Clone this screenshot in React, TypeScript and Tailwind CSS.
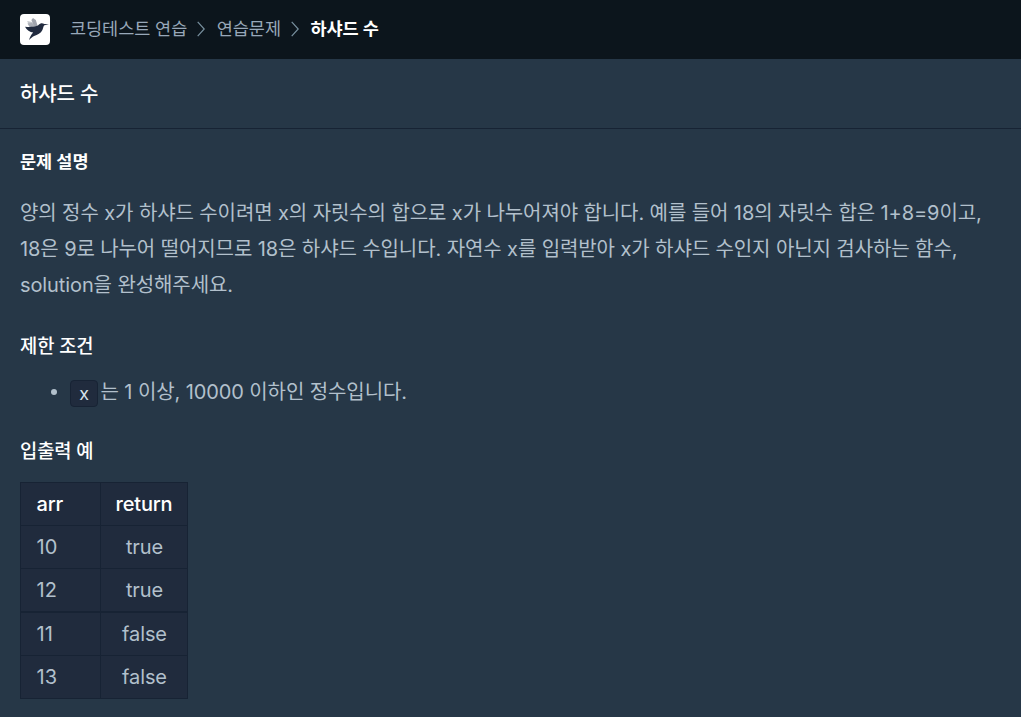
const crumbs = ["코딩테스트 연습", "연습문제"];

const examples = [
  { arr: "10", result: "true" },
  { arr: "12", result: "true" },
  { arr: "11", result: "false" },
  { arr: "13", result: "false" },
];

function Logo() {
  return (
    <svg className="block h-[31px] w-[30px] shrink-0" viewBox="0 0 30 31">
      <rect width="30" height="31" rx="4" fill="#fff" />
      <path d="M7.2 7 12.2 8 16 13.4 9.3 12.8Z" fill="#c3c6cc" />
      <path d="M11.4 6 13 4 15.8 6 17.6 11.8 14.5 13.5Z" fill="#a0a4ad" />
      <path d="M7.4 9.4 12 9.1 15.8 13.2 9.8 13Z" fill="#a9adb5" />
      <path
        d="M5 12.8C8.8 13.1 13.1 13.2 16.5 12.1C18.7 11.3 19.4 9.6 21.3 9.2C22.5 9 23.2 9.6 24.3 9.9L29 10.3L24.4 11.2C23.3 12.1 23.3 14 22.4 16C20.9 19.3 17.5 20.7 14.1 22.1C12.2 22.9 10.8 24.4 9.1 26C9.6 23.7 11.4 20.4 13.2 18.6C9.8 18.1 6.7 16 5 12.8Z"
        fill="#212b3f"
      />
    </svg>
  );
}

function Chevron() {
  return (
    <svg
      className="mr-[11.5px] ml-[10px] h-4 w-2 shrink-0"
      viewBox="0 0 8 16"
      fill="none"
      stroke="#78909f"
      strokeWidth="1.2"
    >
      <path d="M.7.8 7.2 8 .7 15.2" />
    </svg>
  );
}

export default function App() {
  return (
    <div className="h-[717px] w-[1021px] overflow-hidden bg-[#263747] font-['Inter','Noto_Sans_CJK_KR',sans-serif] text-[#b2c0cc]">
      <header className="flex h-[59px] items-center bg-[#0c151c] px-5">
        <Logo />
        <nav className="ml-5 flex items-center pb-0.5 text-[17.5px] leading-6 tracking-[-0.05px] text-[#98a8b9]">
          {crumbs.map((crumb) => (
            <div key={crumb} className="flex items-center">
              <span>{crumb}</span>
              <Chevron />
            </div>
          ))}
          <span className="font-bold text-white">하샤드 수</span>
        </nav>
      </header>

      <div className="flex h-[70px] items-center border-b border-[#172334] px-5">
        <h1 className="text-xl font-[450] tracking-[-0.15px] text-white">하샤드 수</h1>
      </div>

      <main className="px-5 pt-[21px]">
        <h2 className="text-[17.5px] leading-6 font-bold text-white">문제 설명</h2>

        <p className="mt-[21px] text-xl leading-9 tracking-[-0.1px] whitespace-nowrap">
          <span className="block">
            양의 정수 x가 하샤드 수이려면 x의 자릿수의 합으로 x가 나누어져야 합니다. 예를 들어 18의 자릿수 합은 1+8=9이고,
          </span>
          <span className="block">
            18은 9로 나누어 떨어지므로 18은 하샤드 수입니다. 자연수 x를 입력받아 x가 하샤드 수인지 아닌지 검사하는 함수,
          </span>
          <span className="block">solution을 완성해주세요.</span>
        </p>

        <h3 className="mt-[30px] text-[18.75px] leading-7 font-medium tracking-[-0.1px] text-white">제한 조건</h3>

        <ul className="mt-[13px] flex flex-col text-xl leading-9 tracking-[-0.1px]">
          <li className="flex items-center">
            <span className="mr-[13px] ml-[31px] h-1.5 w-1.5 rounded-full bg-[#b2c0cc]" />
            <code className="mt-0.5 mr-[2.5px] flex h-[27px] w-7 items-center justify-center rounded border border-[#172334] bg-[#202b3d] font-['Noto_Sans',sans-serif] text-[17.5px] text-[#d7e2eb]">
              x
            </code>
            <span>는 1 이상, 10000 이하인 정수입니다.</span>
          </li>
        </ul>

        <h3 className="mt-[28px] text-[18.75px] leading-7 font-medium tracking-[-0.1px] text-white">입출력 예</h3>

        <table className="mt-[16px] w-[168px] table-fixed border-collapse bg-[#202b3d] text-xl leading-7">
          <thead>
            <tr className="h-[43px] text-white">
              <th className="w-20 border border-[#172334] p-0 pl-[15.5px] text-left font-[450] tracking-[-0.2px]">
                arr
              </th>
              <th className="border border-[#172334] p-0 text-center font-[450] tracking-[-0.2px]">return</th>
            </tr>
          </thead>
          <tbody>
            {examples.map(({ arr, result }) => (
              <tr key={arr} className="h-[43px] nth-3:h-11 nth-3:border-t-2 nth-3:border-[#172334]">
                <td className="border border-[#172334] p-0 pl-[15.5px]">{arr}</td>
                <td className="border border-[#172334] p-0 pl-px text-center tracking-[-0.1px]">{result}</td>
              </tr>
            ))}
          </tbody>
        </table>
      </main>
    </div>
  );
}
